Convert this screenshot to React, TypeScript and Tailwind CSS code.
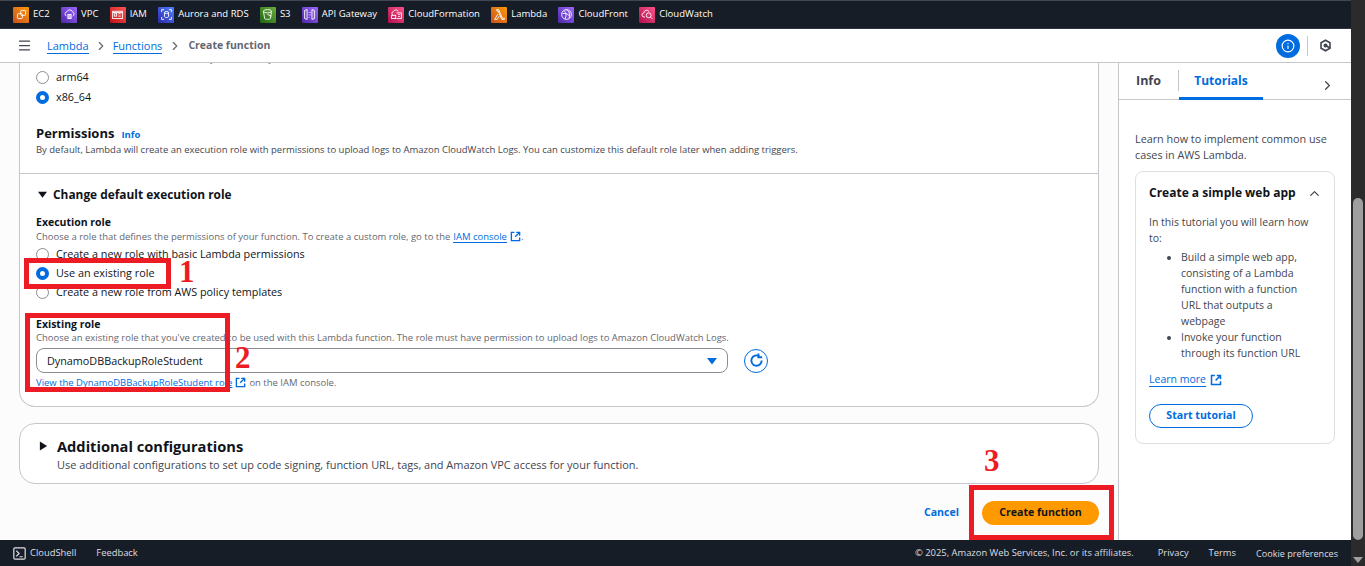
import type { ReactNode } from 'react';
import { ChevronRight, ChevronUp, Menu, Info as InfoIcon } from 'lucide-react';

const FONT = "font-['Open_Sans','Noto_Sans',sans-serif]";

type Service = { name: string; bg: string; icon: ReactNode };

const ic = 'h-[13px] w-[13px] fill-none stroke-white stroke-[1.1]';

const services: Service[] = [
    {
        name: 'EC2',
        bg: 'bg-gradient-to-tr from-[#c8511b] to-[#ff9900]',
        icon: (
            <svg viewBox="0 0 16 16" className={ic}>
                <rect x="7" y="3" width="6" height="6" rx="1" />
                <rect x="3" y="7" width="6" height="6" rx="1" />
            </svg>
        ),
    },
    {
        name: 'VPC',
        bg: 'bg-gradient-to-tr from-[#4d27a8] to-[#a166ff]',
        icon: (
            <svg viewBox="0 0 16 16" className={ic}>
                <path d="M4 10a3 3 0 0 1 1-5.500a3.500 3.500 0 0 1 6.500 0A3 3 0 0 1 12 10" />
                <rect x="6" y="8" width="4" height="5" />
                <path d="M7.300 8v5M8.700 8v5" />
            </svg>
        ),
    },
    {
        name: 'IAM',
        bg: 'bg-gradient-to-tr from-[#bd0816] to-[#ff5252]',
        icon: (
            <svg viewBox="0 0 16 16" className={ic}>
                <rect x="2" y="4" width="12" height="9" />
                <rect x="4" y="7" width="3" height="3" />
                <path d="M9 7h3M9 10h3M2 5.500h12" />
            </svg>
        ),
    },
    {
        name: 'Aurora and RDS',
        bg: 'bg-gradient-to-tr from-[#2e27ad] to-[#527fff]',
        icon: (
            <svg viewBox="0 0 16 16" className={ic}>
                <ellipse cx="8" cy="5.500" rx="2.500" ry="1.200" />
                <path d="M5.500 5.500v5c0 .7 1.100 1.200 2.500 1.200s2.500-.5 2.500-1.200v-5" />
                <path d="M2 5V2h3M11 2h3v3M14 11v3h-3M5 14H2v-3" />
            </svg>
        ),
    },
    {
        name: 'S3',
        bg: 'bg-gradient-to-tr from-[#1b660f] to-[#6cae3e]',
        icon: (
            <svg viewBox="0 0 16 16" className={ic}>
                <path d="M3 4c0-1 2.500-2 5-2s5 1 5 2l-1.500 9c0 .6-1.500 1-3.500 1s-3.500-.4-3.500-1z" />
                <path d="M3 4c0 1 2.500 2 5 2s5-1 5-2M8 8l5 2" />
            </svg>
        ),
    },
    {
        name: 'API Gateway',
        bg: 'bg-gradient-to-tr from-[#4d27a8] to-[#a166ff]',
        icon: (
            <svg viewBox="0 0 16 16" className={ic}>
                <path d="M2 3l3-1v12l-3-1zM14 3l-3-1v12l3-1zM7.500 5v1M7.500 8v1M7.500 11v1M9 5v1M9 8v1" />
            </svg>
        ),
    },
    {
        name: 'CloudFormation',
        bg: 'bg-gradient-to-tr from-[#b0084d] to-[#ff4f8b]',
        icon: (
            <svg viewBox="0 0 16 16" className={ic}>
                <path d="M4 9a2.500 2.500 0 0 1 .5-4.800A3 3 0 0 1 10 4" />
                <rect x="2" y="9" width="5" height="4" />
                <path d="M8 6h6v7H8M10 8h2M10 10.500h2" />
            </svg>
        ),
    },
    {
        name: 'Lambda',
        bg: 'bg-gradient-to-tr from-[#c8511b] to-[#ff9900]',
        icon: (
            <svg viewBox="0 0 16 16" className={ic}>
                <path d="M4.500 2H7l4.500 10.500H14V14h-3.300L6.300 3.500H4.500zM6 7.500L2 14h3l2.500-4" />
            </svg>
        ),
    },
    {
        name: 'CloudFront',
        bg: 'bg-gradient-to-tr from-[#4d27a8] to-[#a166ff]',
        icon: (
            <svg viewBox="0 0 16 16" className={ic}>
                <circle cx="8" cy="8" r="6" />
                <path d="M5 3.500c3 2 3 7 1 10M8 2.500c3 1 5 5 3 10M3 7c3-1 6 0 9 3" />
            </svg>
        ),
    },
    {
        name: 'CloudWatch',
        bg: 'bg-gradient-to-tr from-[#b0084d] to-[#ff4f8b]',
        icon: (
            <svg viewBox="0 0 16 16" className={ic}>
                <path d="M5 11H4a2.500 2.500 0 0 1-.5-5A3.500 3.500 0 0 1 10 4.500" />
                <circle cx="9.500" cy="9" r="3" />
                <path d="M11.700 11.200L14 13.500" />
            </svg>
        ),
    },
];

function ExternalIcon({ className }: { className?: string }) {
    return (
        <svg viewBox="0 0 16 16" className={`fill-none stroke-[#006ce0] stroke-2 ${className ?? ''}`}>
            <path d="M6.500 2H2v12h12V9.500" />
            <path d="M9 2h5v5M14 2L7.500 8.500" />
        </svg>
    );
}

function Radio({ checked = false, label }: { checked?: boolean; label: string }) {
    return (
        <div className="flex h-[19px] items-center gap-[7px]">
            {checked ? (
                <span className="h-[13px] w-[13px] rounded-full border-[4px] border-[#006ce0] bg-white" />
            ) : (
                <span className="h-[13px] w-[13px] rounded-full border border-[#8c8c94] bg-white" />
            )}
            <span className="text-[10.8px] text-[#0f141a]">{label}</span>
        </div>
    );
}

function RedBox({ className }: { className: string }) {
    return <div className={`absolute border-[5px] border-[#ed1c24] ${className}`} />;
}

function Step({ n, className }: { n: string; className: string }) {
    return (
        <span className={`absolute font-['Liberation_Serif',serif] text-[31px] leading-none font-bold text-[#ed1c24] ${className}`}>
            {n}
        </span>
    );
}

function TopNav() {
    return (
        <div className="flex h-[29px] shrink-0 items-center gap-[11.3px] border-y border-t-[#414750] border-b-[#2c333d] bg-[#161d26] pl-[13px]">
            {services.map((s) => (
                <div key={s.name} className="flex items-center gap-[4px]">
                    <span className={`flex h-4 w-4 items-center justify-center rounded-[1px] ${s.bg}`}>{s.icon}</span>
                    <span className="text-[9.5px] whitespace-nowrap text-white">{s.name}</span>
                </div>
            ))}
        </div>
    );
}

function Breadcrumbs() {
    return (
        <div className="flex h-[34px] shrink-0 items-center border-b border-b-[#c6c6cd] bg-white pl-[17px]">
            <Menu className="h-[15px] w-[15px] text-[#424650]" strokeWidth={2} />
            <span className="ml-[15px] border-b border-[#006ce0] text-[11px] leading-[15px] text-[#006ce0]">Lambda</span>
            <ChevronRight className="mx-[5px] h-[14px] w-[14px] text-[#656871]" />
            <span className="border-b border-[#006ce0] text-[11px] leading-[15px] text-[#006ce0]">Functions</span>
            <ChevronRight className="mx-[6px] h-[14px] w-[14px] text-[#656871]" />
            <span className="text-[10.5px] font-bold text-[#656871]">Create function</span>
            <div className="ml-auto flex items-center">
                <span className="flex h-6 w-6 items-center justify-center rounded-full bg-[#006ce0]">
                    <InfoIcon className="h-[14px] w-[14px] text-white" strokeWidth={2} />
                </span>
                <span className="mx-[7px] h-5 w-px bg-[#c6c6cd]" />
                <svg viewBox="0 0 16 16" className="mr-[19px] ml-[4px] h-[13px] w-[13px] fill-none stroke-[#424650] stroke-2">
                    <path d="M8 1.500l5.500 3.200v6.600L8 14.500l-5.500-3.200V4.700z" />
                    <circle cx="8" cy="8" r="1.500" className="fill-[#424650]" />
                    <path d="M8 8l5.500 3" />
                </svg>
            </div>
        </div>
    );
}

function MainForm() {
    return (
        <div className="relative flex min-w-0 flex-1 flex-col overflow-hidden bg-[#fcfcfc] px-[19px]">
            <div className="h-[344px] shrink-0 overflow-hidden rounded-b-[16px] border-x border-b border-[#c6c6cd] bg-white">
                <div className="-mt-[12px] pl-[16px] text-[9.48px] leading-[15px] text-[#656871]">
                    Choose the instruction set architecture you want for your function code.
                </div>
                <div className="mt-[2px] flex flex-col pl-[16px]">
                    <Radio label="arm64" />
                    <span className="h-px" />
                    <Radio checked label="x86_64" />
                </div>
                <div className="mt-[16px] flex items-baseline gap-[7px] pl-[16px]">
                    <span className="text-[13px] leading-[20px] font-bold text-[#0f141a]">Permissions</span>
                    <span className="text-[9.5px] font-bold text-[#006ce0]">Info</span>
                </div>
                <p className="pl-[16px] text-[9.48px] leading-[14px] text-[#424650]">
                    By default, Lambda will create an execution role with permissions to upload logs to Amazon CloudWatch Logs. You can customize this default role later when adding triggers.
                </p>
                <div className="mt-[16px] border-t border-t-[#c6c6cd] pt-[10px] pl-[16px]">
                    <div className="flex items-center gap-[6px]">
                        <svg viewBox="0 0 10 10" className="ml-[2px] h-[9px] w-[9px] fill-[#0f141a]">
                            <path d="M0 2h10L5 8.500z" />
                        </svg>
                        <span className="text-[11.9px] leading-[20px] font-bold text-[#0f141a]">Change default execution role</span>
                    </div>
                    <div className="mt-[10px] text-[10.5px] leading-[16px] font-bold text-[#0f141a]">Execution role</div>
                    <div className="flex items-center text-[9.48px] leading-[13px] text-[#656871]">
                        Choose a role that defines the permissions of your function. To create a custom role, go to the
                        <span className="ml-[3px] border-b border-[#006ce0] leading-[11px] text-[#006ce0]">IAM console</span>
                        <ExternalIcon className="ml-[3px] h-[11px] w-[11px]" />.
                    </div>
                    <div className="mt-[2px] flex flex-col">
                        <Radio label="Create a new role with basic Lambda permissions" />
                        <Radio checked label="Use an existing role" />
                        <Radio label="Create a new role from AWS policy templates" />
                    </div>
                    <div className="mt-[15px] text-[10.5px] leading-[14px] font-bold text-[#0f141a]">Existing role</div>
                    <div className="text-[9.48px] leading-[13px] text-[#656871]">
                        Choose an existing role that you've created to be used with this Lambda function. The role must have permission to upload logs to Amazon CloudWatch Logs.
                    </div>
                    <div className="mt-[4px] flex items-center gap-4">
                        <div className="flex h-[25px] w-[692px] items-center justify-between rounded-[8px] border border-[#8c8c94] bg-white pt-[1px] pr-[10px] pl-[10px]">
                            <span className="text-[10.8px] text-[#0f141a]">DynamoDBBackupRoleStudent</span>
                            <svg viewBox="0 0 10 10" className="h-[10px] w-[10px] fill-[#006ce0]">
                                <path d="M0 2h10L5 8.500z" />
                            </svg>
                        </div>
                        <span className="flex h-6 w-6 items-center justify-center rounded-full border border-[#006ce0]">
                            <svg viewBox="0 0 16 16" className="h-[15px] w-[15px] fill-none stroke-[#006ce0] stroke-2">
                                <path d="M13.500 8A5.500 5.500 0 1 1 11 3.500" />
                                <path d="M10 .5v4h4" />
                            </svg>
                        </span>
                    </div>
                    <div className="mt-[3px] flex items-center text-[9.48px] leading-[13px] text-[#656871]">
                        <span className="text-[#006ce0] underline">View the DynamoDBBackupRoleStudent role</span>
                        <ExternalIcon className="mx-[3px] h-[11px] w-[11px]" />
                        on the IAM console.
                    </div>
                </div>
            </div>
            <div className="mt-4 h-[61px] shrink-0 rounded-[16px] border border-[#c6c6cd] bg-white pt-[12px] pl-[19px]">
                <div className="flex items-center gap-[9px]">
                    <svg viewBox="0 0 10 10" className="h-[10px] w-[9px] fill-[#0f141a]">
                        <path d="M1 0l8 5-8 5z" />
                    </svg>
                    <span className="text-[14.65px] leading-[20px] font-bold text-[#0f141a]">Additional configurations</span>
                </div>
                <p className="mt-[1px] ml-[18px] text-[10.95px] leading-[15px] text-[#424650]">
                    Use additional configurations to set up code signing, function URL, tags, and Amazon VPC access for your function.
                </p>
            </div>
            <div className="mt-[17px] flex items-center justify-end gap-[23px]">
                <span className="text-[10.6px] font-bold text-[#006ce0]">Cancel</span>
                <span className="flex h-6 w-[117px] items-center justify-center rounded-full bg-[#ff9900] text-[10.6px] font-bold text-[#0f141a]">
                    Create function
                </span>
            </div>
        </div>
    );
}

function HelpPanel() {
    return (
        <div className="w-[233px] shrink-0 overflow-hidden border-l border-l-[#c6c6cd] bg-white">
            <div className="flex h-[37px] items-start border-b border-b-[#c6c6cd] pl-[17px]">
                <span className="mt-[9px] text-[12.5px] leading-[18px] font-bold text-[#424650]">Info</span>
                <span className="mt-[7px] ml-[17px] h-[21px] w-px bg-[#c6c6cd]" />
                <span className="flex h-[37px] w-[84px] flex-col items-center border-b-[3px] border-b-[#006ce0] pt-[9px] text-[12px] leading-[18px] font-bold text-[#006ce0]">
                    Tutorials
                </span>
                <ChevronRight className="mt-[15px] ml-[57px] h-[15px] w-[15px] text-[#424650]" />
            </div>
            <p className="mt-[31px] w-[216px] pl-[16px] text-[10.8px] leading-[16px] text-[#424650]">
                Learn how to implement common use cases in AWS Lambda.
            </p>
            <div className="mt-[8px] ml-[16px] h-[273px] w-[200px] rounded-[8px] border border-[#dedee3] pt-[12px] pr-[12px] pl-[13px]">
                <div className="flex items-center justify-between">
                    <span className="text-[12px] leading-[18px] font-bold text-[#0f141a]">Create a simple web app</span>
                    <ChevronUp className="h-[15px] w-[15px] text-[#424650]" />
                </div>
                <div className="mt-[12px] pr-[3px] text-[10.5px] leading-[16px] text-[#424650]">
                    In this tutorial you will learn how to:
                </div>
                <ul className="mt-[3px] list-disc pr-[3px] pl-[32px] text-[10.5px] leading-[16px] text-[#424650]">
                    <li>Build a simple web app, consisting of a Lambda function with a function URL that outputs a webpage</li>
                    <li>Invoke your function through its function URL</li>
                </ul>
                <div className="mt-[11px] flex items-center gap-[4px]">
                    <span className="border-b border-[#006ce0] text-[10.5px] leading-[14px] text-[#006ce0]">Learn more</span>
                    <ExternalIcon className="h-[12px] w-[12px]" />
                </div>
                <div className="mt-[17px] flex h-6 w-[104px] items-center justify-center rounded-full border border-[#006ce0] text-[10.6px] font-bold text-[#006ce0]">
                    Start tutorial
                </div>
            </div>
        </div>
    );
}

function Footer() {
    return (
        <div className="flex h-[26px] shrink-0 items-center bg-[#161d26] pt-[1px] pr-[13px] pl-[13px] text-[9.4px] text-[#dedee3]">
            <svg viewBox="0 0 16 16" className="h-[13px] w-[13px] fill-none stroke-[#dedee3] stroke-[1.500]">
                <rect x="1" y="1" width="14" height="14" rx="1.500" />
                <path d="M4 4.500L7.500 8 4 11.500M8 12h4" />
            </svg>
            <span className="ml-[4px] font-medium">CloudShell</span>
            <span className="ml-[20px] font-medium">Feedback</span>
            <span className="ml-auto">© 2025, Amazon Web Services, Inc. or its affiliates.</span>
            <span className="ml-[24px]">Privacy</span>
            <span className="ml-[20px]">Terms</span>
            <span className="ml-[20px] text-[9.1px]">Cookie preferences</span>
        </div>
    );
}

export default function App() {
    return (
        <div className={`relative flex h-[566px] w-[1365px] overflow-hidden bg-[#2b2b2b] ${FONT}`}>
            <div className="flex w-[1351px] shrink-0 flex-col">
                <TopNav />
                <Breadcrumbs />
                <div className="flex min-h-0 flex-1">
                    <MainForm />
                    <HelpPanel />
                </div>
                <Footer />
            </div>
            <div className="flex flex-1 flex-col pt-[198px] pl-[2px]">
                <div className="h-[342px] w-[10px] rounded-full bg-[#9f9f9f]" />
                <svg viewBox="0 0 10 6" className="mt-[17px] h-[6px] w-[10px] fill-[#9f9f9f]">
                    <path d="M0 0h10L5 6z" />
                </svg>
            </div>

            <RedBox className="top-[258px] left-[24px] h-[31px] w-[147px]" />
            <RedBox className="top-[313px] left-[25px] h-[79px] w-[205px]" />
            <RedBox className="top-[485px] left-[969px] h-[55px] w-[145px]" />
            <Step n="1" className="top-[256px] left-[179px]" />
            <Step n="2" className="top-[342px] left-[235px]" />
            <Step n="3" className="top-[445px] left-[984px]" />
        </div>
    );
}
